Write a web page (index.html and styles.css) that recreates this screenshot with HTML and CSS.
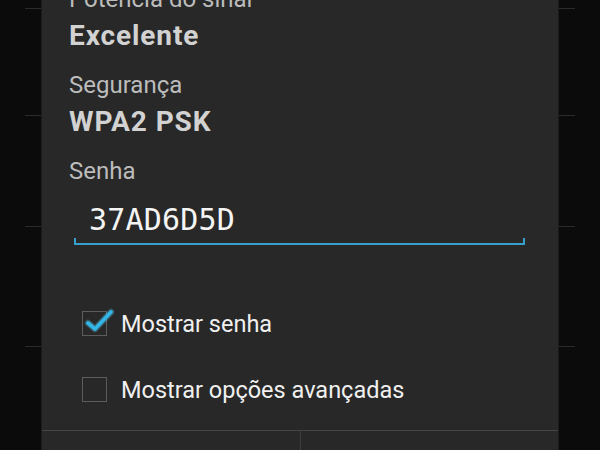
FILE: index.html
```html
<!DOCTYPE html>
<html lang="pt">
<head>
<meta charset="utf-8">
<title>Wi-Fi</title>
<link rel="stylesheet" href="styles.css">
</head>
<body>
<div class="screen">
  <div class="list">
    <div class="row row-a"></div>
    <div class="row row-b"></div>
    <div class="row row-c"></div>
    <div class="row row-d"></div>
  </div>

  <div class="dialog">
    <div class="content">
      <div class="label first">Potência do sinal</div>
      <div class="value">Excelente</div>
      <div class="label">Segurança</div>
      <div class="value">WPA2 PSK</div>
      <div class="label">Senha</div>
      <div class="field">
        <div class="field-text">37AD6D5D</div>
        <div class="field-line"></div>
      </div>
      <div class="checks">
        <div class="check-row">
          <span class="box checked">
            <svg class="tick" width="36" height="26" viewBox="0 0 36 26" aria-hidden="true">
              <polyline points="6,13 13,19 29,2" fill="none" stroke="#5cc8f0" stroke-width="6.5" stroke-opacity="0.3" stroke-linecap="round" stroke-linejoin="round"/>
              <polyline points="6,13 13,19 29,2" fill="none" stroke="#33b5e5" stroke-width="3.8" stroke-linecap="round" stroke-linejoin="round"/>
            </svg>
          </span>
          <span class="check-text">Mostrar senha</span>
        </div>
        <div class="check-row">
          <span class="box"></span>
          <span class="check-text">Mostrar opções avançadas</span>
        </div>
      </div>
    </div>
    <div class="buttons">
      <div class="btn"></div>
      <div class="btn"></div>
    </div>
  </div>
</div>
</body>
</html>
```

FILE: styles.css
```css
html, body {
  margin: 0;
  padding: 0;
  background: #0b0b0c;
  width: 600px;
  height: 450px;
  overflow: hidden;
}

.screen {
  position: relative;
  width: 600px;
  height: 450px;
  overflow: hidden;
  font-family: Roboto, "Noto Sans", sans-serif;
}

.list {
  display: flex;
  flex-direction: column;
  padding: 0 25px;
}

.row {
  border-bottom: 1px solid #2b2b2b;
}
.row-a { height: 8px; }
.row-b { height: 106px; }
.row-c { height: 110px; }
.row-d { height: 119px; }

.dialog {
  position: absolute;
  left: 42px;
  top: -16px;
  width: 516px;
  background: #282828;
  display: flex;
  flex-direction: column;
  box-shadow: 0 0 0 1px #1c1c1c;
}

.content {
  display: flex;
  flex-direction: column;
  padding: 0 27px 8px 27px;
}

.label {
  font-size: 24px;
  line-height: 30px;
  color: #bcbcbc;
  margin-top: 17px;
}
.label.first {
  margin-top: 0;
}

.value {
  font-size: 28px;
  line-height: 34px;
  font-weight: 700;
  letter-spacing: 0.9px;
  color: #d2d2d2;
  margin-top: 5px;
}

.field {
  margin: 14px 6px 0 5px;
  display: flex;
  flex-direction: column;
}

.field-text {
  font-family: "DejaVu Sans Mono", "Liberation Mono", monospace;
  font-size: 30px;
  line-height: 40px;
  color: #f4f4f4;
  padding-left: 15px;
  letter-spacing: 0.2px;
}

.field-line {
  height: 5px;
  margin-top: -2px;
  border: 2px solid #379fcc;
  border-top: none;
}

.checks {
  display: flex;
  flex-direction: column;
  margin-top: 45px;
}

.check-row {
  height: 66px;
  display: flex;
  align-items: center;
  padding-left: 13px;
}

.box {
  position: relative;
  width: 23px;
  height: 23px;
  border: 1.5px solid #5c5c5c;
  flex: none;
}

.tick {
  position: absolute;
  left: -1.5px;
  top: -1.5px;
  overflow: visible;
}

.check-text {
  margin-left: 14px;
  font-size: 23.5px;
  color: #f0f0f0;
  line-height: 30px;
  padding-top: 2px;
}

.buttons {
  display: flex;
  border-top: 1px solid #444444;
  height: 48px;
}

.btn {
  flex: 1;
}
.btn + .btn {
  border-left: 1px solid #3e3e3e;
}
```
